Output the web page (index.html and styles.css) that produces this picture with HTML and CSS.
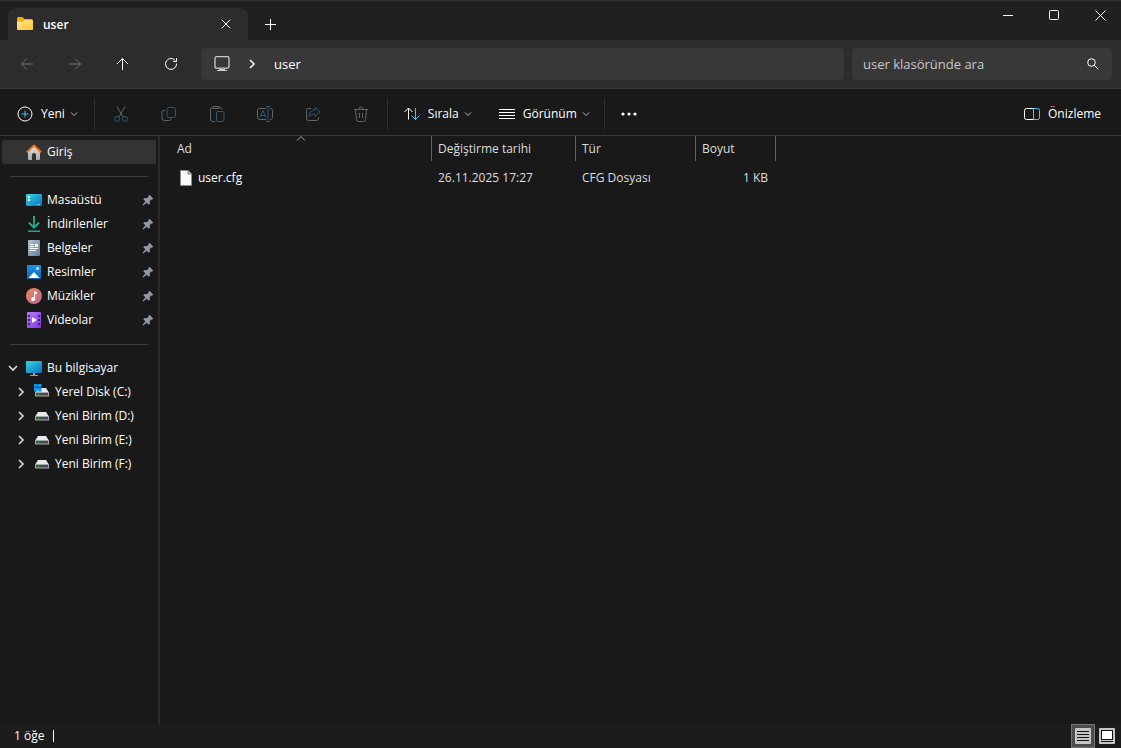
FILE: index.html
```html
<!DOCTYPE html>
<html lang="tr">
<head>
  <meta charset="UTF-8">
  <title>user</title>
  <link rel="stylesheet" href="styles.css">
</head>
<body>
  <svg class="defs" aria-hidden="true">
    <defs>
      <linearGradient id="blue" x1="0" y1="0" x2="1" y2="1"><stop offset="0" stop-color="#35d6e0"/><stop offset="1" stop-color="#0a6fc2"/></linearGradient>
      <linearGradient id="gold" x1="0" y1="0" x2="1" y2="1"><stop offset="0" stop-color="#ffe69a"/><stop offset="1" stop-color="#ffc62e"/></linearGradient>
      <linearGradient id="grey" x1="0" y1="0" x2="0" y2="1"><stop offset="0" stop-color="#e4e4e4"/><stop offset="1" stop-color="#a8a8a8"/></linearGradient>
      <linearGradient id="green" x1="0" y1="0" x2="0" y2="1"><stop offset="0" stop-color="#2fd08a"/><stop offset="1" stop-color="#12a59a"/></linearGradient>
      <linearGradient id="slate" x1="0" y1="0" x2="1" y2="1"><stop offset="0" stop-color="#b4c4d6"/><stop offset="1" stop-color="#5f7f9f"/></linearGradient>
      <linearGradient id="sky" x1="0" y1="0" x2="0" y2="1"><stop offset="0" stop-color="#1a94e4"/><stop offset="1" stop-color="#0c65bd"/></linearGradient>
      <linearGradient id="music" x1="0" y1="0" x2="1" y2="1"><stop offset="0" stop-color="#f28b52"/><stop offset="1" stop-color="#b8629c"/></linearGradient>
      <linearGradient id="purple" x1="0" y1="0" x2="1" y2="1"><stop offset="0" stop-color="#b67bfa"/><stop offset="1" stop-color="#8038e0"/></linearGradient>
    </defs>
    <symbol id="down" viewBox="0 0 8 8"><path d="M1 2.500l3 3 3-3"/></symbol>
    <symbol id="right" viewBox="0 0 10 10"><path d="M3 1l4 4-4 4"/></symbol>
    <symbol id="pin" viewBox="0 0 12 12"><path d="M7.500.8l3.700 3.700-1 1-.7-.1-1.700 1.700.1 2.400-1.200 1.200-2-2L1.300 11.400l-.7-.7 2.700-3.400-2-2 1.200-1.200 2.400.1L6.600 2.500l-.1-.7z"/></symbol>
    <symbol id="drive" viewBox="0 0 16 16"><path d="M4 4h8l2.500 4h-13z" fill="#e6e8ec"/><path d="M1 8h14v4.500H1z" fill="#a9a9ad"/><path d="M2 9h12v2.500H2z" fill="#4a4a4d"/><path d="M4 10h1v1H4z" fill="#38e03e"/></symbol>
  </svg>

  <header class="title-bar">
    <div class="tab">
      <svg class="icon" viewBox="0 0 16 16"><path d="M0 2.500C0 1.700.7 1 1.500 1h4l2 2H14c1 0 2 .6 2 1.500V8H0z" fill="#f2a900"/><path d="M0 5.500h6L8 4h7c.6 0 1 .4 1 1v8c0 .6-.4 1-1 1H1c-.6 0-1-.4-1-1z" fill="url(#gold)"/></svg>
      <span class="tab-name">user</span>
      <button class="tab-close" aria-label="Sekmeyi kapat"><svg class="line" width="10" height="10" viewBox="0 0 10 10"><path d="M.8.8l8.400 8.400M9.200.8L.8 9.200"/></svg></button>
    </div>
    <button class="tab-new" aria-label="Yeni sekme"><svg class="line" width="11" height="11" viewBox="0 0 11 11"><path d="M5.500 0v11M0 5.500h11"/></svg></button>
    <div class="window-buttons">
      <button aria-label="Simge durumuna küçült"><svg class="line" width="11" height="11" viewBox="0 0 11 11"><path d="M0 5.500h10"/></svg></button>
      <button aria-label="Ekranı kapla"><svg class="line" width="11" height="11" viewBox="0 0 11 11"><rect x=".5" y=".5" width="9" height="9" rx="1"/></svg></button>
      <button aria-label="Kapat"><svg class="line" width="11" height="11" viewBox="0 0 11 11"><path d="M.5.5l10 10M10.500.5l-10 10"/></svg></button>
    </div>
  </header>

  <div class="nav-bar">
    <button class="nav-button" aria-label="Geri" disabled><svg class="icon line" viewBox="0 0 16 16"><path d="M14 8H2.500M8 2.500L2.500 8 8 13.500"/></svg></button>
    <button class="nav-button" aria-label="İleri" disabled><svg class="icon line" viewBox="0 0 16 16"><path d="M2 8h11.500M8 2.500L13.500 8 8 13.500"/></svg></button>
    <button class="nav-button" aria-label="Yukarı"><svg class="icon line" viewBox="0 0 16 16"><path d="M7.500 14V2.500M2 8l5.500-5.500L13 8"/></svg></button>
    <button class="nav-button" aria-label="Yenile"><svg class="icon line" viewBox="0 0 16 16"><path d="M13.500 7.500A5.500 5.500 0 1 1 12.300 4.500M13.500 2v3.500H10"/></svg></button>
    <nav class="address">
      <svg class="icon line monitor" viewBox="0 0 16 16"><rect x="1" y=".7" width="14" height="11.500" rx="1.500" stroke-width="1.300"/><path d="M5.500 12.500v2M10.500 12.500v2M3 14.500h10M5.500 13.500h5"/></svg>
      <svg class="line arrow" width="10" height="10"><use href="#right"/></svg>
      <a href="#">user</a>
    </nav>
    <div class="search">
      <input type="text" aria-label="Ara" placeholder="user klasöründe ara">
      <svg class="line" width="12" height="12" viewBox="0 0 12 12"><circle cx="4.500" cy="4.500" r="3.800"/><path d="M7.300 7.300l4 4"/></svg>
    </div>
  </div>

  <div class="command-bar">
    <button class="command new"><svg class="icon line" viewBox="0 0 16 16"><circle cx="8" cy="8" r="7"/><path class="accent" d="M8 4.500v7M4.500 8h7"/></svg>Yeni<svg class="line caret" width="8" height="8"><use href="#down"/></svg></button>
    <div class="group">
      <button class="tool" aria-label="Kes" disabled><svg class="icon line" viewBox="0 0 16 16"><path d="M4 .5l6 10.500M12 .5L6 11"/><circle class="accent" cx="4" cy="13" r="2.500"/><circle class="accent" cx="12" cy="13" r="2.500"/></svg></button>
      <button class="tool" aria-label="Kopyala" disabled><svg class="icon line" viewBox="0 0 16 16"><path d="M4 4.500H3a2 2 0 0 0-2 2V12a2.500 2.500 0 0 0 2.500 2.500H8a2 2 0 0 0 2-2"/><rect class="accent" x="6" y="1.500" width="8.500" height="10" rx="2"/></svg></button>
      <button class="tool" aria-label="Yapıştır" disabled><svg class="icon line" viewBox="0 0 16 16"><path d="M6 15.500H3.500a2 2 0 0 1-2-2v-10a2 2 0 0 1 2-2H4M10 1.500h1a2 2 0 0 1 2 2M4 .5h6v2H4z"/><rect class="accent" x="7.500" y="5.500" width="7.500" height="10" rx="1.500"/></svg></button>
      <button class="tool" aria-label="Yeniden adlandır" disabled><svg class="icon line" viewBox="0 0 16 16"><path d="M9 2.500H2.500a2 2 0 0 0-2 2v7a2 2 0 0 0 2 2H9M13 2.500h.5a2 2 0 0 1 2 2v7a2 2 0 0 1-2 2H13"/><path class="accent" d="M3 11.500l3-7 3 7M4 9.500h4M11 .5v15M9 .5h4M9 15.500h4"/></svg></button>
      <button class="tool" aria-label="Paylaş" disabled><svg class="icon line" viewBox="0 0 16 16"><path d="M6 2.500H3.500a2 2 0 0 0-2 2v8a2 2 0 0 0 2 2h8a2 2 0 0 0 2-2V11"/><path class="accent" d="M10 1.500l5 4.500-5 4.500V8C7 8 5.500 9 4 11c0-4 2-7 6-7z"/></svg></button>
      <button class="tool" aria-label="Sil" disabled><svg class="icon line" viewBox="0 0 16 16"><path d="M1 3.500h14M6 3a2 2 0 0 1 4 0M2.500 3.500l1 10a2 2 0 0 0 2 2h5a2 2 0 0 0 2-2l1-10M6.500 7v5M9.500 7v5"/></svg></button>
    </div>
    <button class="command"><svg class="icon line" viewBox="0 0 16 16"><path d="M4.500 13.500V2M.5 6l4-4 4 4"/><path class="accent" d="M11.500 2v11.500M7.500 9.500l4 4 4-4"/></svg>Sırala<svg class="line caret" width="8" height="8"><use href="#down"/></svg></button>
    <button class="command view"><svg class="icon line" viewBox="0 0 16 16"><path d="M0 3.500h16M0 6.500h16M0 9.500h16M0 12.500h16"/></svg>Görünüm<svg class="line caret" width="8" height="8"><use href="#down"/></svg></button>
    <button class="more" aria-label="Daha fazla"><svg class="icon" viewBox="0 0 16 16" fill="#fff"><circle cx="2" cy="8" r="1.600"/><circle cx="8" cy="8" r="1.600"/><circle cx="14" cy="8" r="1.600"/></svg></button>
    <button class="command preview"><svg class="icon line" viewBox="0 0 16 16"><path d="M9.500 2.500h-7a2 2 0 0 0-2 2v7a2 2 0 0 0 2 2h7"/><path class="accent" d="M9.500 2.500h4a2 2 0 0 1 2 2v7a2 2 0 0 1-2 2h-4z"/></svg>Önizleme</button>
  </div>

  <div class="content">
    <nav class="sidebar">
      <a class="place active" href="#"><svg class="icon" viewBox="0 0 16 16"><path d="M2 7.500L8 2l6 5.500V15a1 1 0 0 1-1 1h-3v-5a2 2 0 0 0-4 0v5H3a1 1 0 0 1-1-1z" fill="url(#grey)"/><path d="M.8 8.200L8 1.500l7.200 6.700" fill="none" stroke="#ec7413" stroke-width="2"/></svg>Giriş</a>
      <hr>
      <a class="place" href="#"><svg class="icon" viewBox="0 0 16 16"><rect y="2" width="16" height="12" rx="1" fill="url(#blue)"/><path d="M2 4h2v2H2zM2 7h2v2H2zM11 12h1v1h-1zM13 12h1v1h-1z" fill="#fff"/></svg>Masaüstü<svg class="pin" width="12" height="12"><use href="#pin"/></svg></a>
      <a class="place" href="#"><svg class="icon" viewBox="0 0 16 16"><path d="M7.200 0h1.600v9.500L12.500 6l1.200 1.200L8 13 2.300 7.200 3.500 6l3.700 3.500zM2 14.500h12V16H2z" fill="url(#green)"/></svg>İndirilenler<svg class="pin" width="12" height="12"><use href="#pin"/></svg></a>
      <a class="place" href="#"><svg class="icon" viewBox="0 0 16 16"><rect x="2" width="12" height="16" rx="1" fill="url(#slate)"/><path d="M4 4h4v1H4zM4 6h4v1H4zM9 4h3v3H9zM4 8h8v1H4zM4 10h6v1H4z" fill="#fff"/></svg>Belgeler<svg class="pin" width="12" height="12"><use href="#pin"/></svg></a>
      <a class="place" href="#"><svg class="icon" viewBox="0 0 16 16"><rect x="1" y="1" width="14" height="14" rx="1" fill="url(#sky)"/><path d="M2.500 14L8 8l5.500 6z" fill="#fff"/><circle cx="11.500" cy="4.500" r="1.500" fill="#bde7ff"/></svg>Resimler<svg class="pin" width="12" height="12"><use href="#pin"/></svg></a>
      <a class="place" href="#"><svg class="icon" viewBox="0 0 16 16"><circle cx="8" cy="8" r="8" fill="url(#music)"/><path d="M8 3l3 1v2L9.200 5.500V11a2 2 0 1 1-1.200-1.800z" fill="#fff"/></svg>Müzikler<svg class="pin" width="12" height="12"><use href="#pin"/></svg></a>
      <a class="place" href="#"><svg class="icon" viewBox="0 0 16 16"><rect x="1" width="14" height="16" rx="1" fill="url(#purple)"/><path d="M6 5l5 3-5 3z" fill="#fff"/><path d="M2 3h2v2H2zM2 7h2v2H2zM2 11h2v2H2zM12 3h2v2h-2zM12 7h2v2h-2zM12 11h2v2h-2z" fill="#43207c"/></svg>Videolar<svg class="pin" width="12" height="12"><use href="#pin"/></svg></a>
      <hr>
      <div class="branch">
        <button class="toggle open" aria-label="Daralt"><svg class="line" width="10" height="10"><use href="#right"/></svg></button>
        <a href="#"><svg class="icon" viewBox="0 0 16 16"><path d="M7 13h2v2h3v1H4v-1h3z" fill="#9aa4ad"/><rect y="1" width="16" height="12" rx="1" fill="url(#blue)"/></svg>Bu bilgisayar</a>
      </div>
      <div class="branch child">
        <button class="toggle" aria-label="Genişlet"><svg class="line" width="10" height="10"><use href="#right"/></svg></button>
        <a href="#"><svg class="icon" viewBox="0 0 16 16"><use href="#drive"/><path d="M0 0h3.500v3.500H0zM4 0h3.500v3.500H4zM0 4h3.500v3.500H0zM4 4h3.500v3.500H4z" fill="#1593e6"/></svg>Yerel Disk (C:)</a>
      </div>
      <div class="branch child">
        <button class="toggle" aria-label="Genişlet"><svg class="line" width="10" height="10"><use href="#right"/></svg></button>
        <a href="#"><svg class="icon"><use href="#drive"/></svg>Yeni Birim (D:)</a>
      </div>
      <div class="branch child">
        <button class="toggle" aria-label="Genişlet"><svg class="line" width="10" height="10"><use href="#right"/></svg></button>
        <a href="#"><svg class="icon"><use href="#drive"/></svg>Yeni Birim (E:)</a>
      </div>
      <div class="branch child">
        <button class="toggle" aria-label="Genişlet"><svg class="line" width="10" height="10"><use href="#right"/></svg></button>
        <a href="#"><svg class="icon"><use href="#drive"/></svg>Yeni Birim (F:)</a>
      </div>
    </nav>

    <main class="files">
      <table>
        <thead>
          <tr>
            <th class="name">Ad<svg class="sort line" width="10" height="6" viewBox="0 0 10 6"><path d="M1 4.500l4-4 4 4"/></svg></th>
            <th class="date">Değiştirme tarihi</th>
            <th class="type">Tür</th>
            <th class="size">Boyut</th>
          </tr>
        </thead>
        <tbody>
          <tr>
            <td class="name"><a href="#"><svg class="icon" viewBox="0 0 16 16"><path d="M3.500.5H11L14.500 4v11.500h-11z" fill="#fafafa" stroke="#8a8a8a"/><path d="M11 .5V4h3.500" fill="#ccc" stroke="#777"/></svg>user.cfg</a></td>
            <td>26.11.2025 17:27</td>
            <td>CFG Dosyası</td>
            <td class="number">1 KB</td>
          </tr>
        </tbody>
      </table>
    </main>
  </div>

  <footer class="status-bar">
    <span class="count">1 öğe</span>
    <div class="layouts">
      <button class="selected" aria-label="Ayrıntılar"><svg class="icon" viewBox="0 0 16 16"><rect width="16" height="16" rx="1" fill="#c8c6c4"/><path d="M2 3.500h12M2 6.500h12M2 9.500h12M2 12.500h12" stroke="#111"/></svg></button>
      <button aria-label="Büyük simgeler"><svg class="icon" viewBox="0 0 16 16"><rect width="16" height="16" rx="1" fill="#c8c6c4"/><rect x="2.500" y="2.500" width="11" height="9" fill="#fff" stroke="#111"/><path d="M2 13.500h12" stroke="#111"/></svg></button>
    </div>
  </footer>
</body>
</html>
```
FILE: styles.css
```css
* {
  box-sizing: border-box;
}
body {
  display: flex;
  flex-direction: column;
  min-height: 100vh;
  margin: 0;
  background: #191919;
  color: #fff;
  font: 12px/16px "Open Sans", "Noto Sans", sans-serif;
}
button {
  display: flex;
  align-items: center;
  justify-content: center;
  padding: 0;
  border: 0;
  background: none;
  color: inherit;
  font: inherit;
}
a {
  color: inherit;
  text-decoration: none;
}
svg {
  flex: none;
}
.defs {
  position: absolute;
  width: 0;
  height: 0;
}
.icon {
  width: 16px;
  height: 16px;
}
.line {
  fill: none;
  stroke: currentColor;
}
.accent {
  stroke: #4cc2ff;
}

/* title bar */
.title-bar {
  display: flex;
  height: 40px;
  padding-left: 8px;
  border-top: 1px solid #333;
  background: #202020;
}
.tab {
  display: flex;
  align-items: center;
  width: 240px;
  margin-top: 7px;
  padding: 0 11px 0 9px;
  border-radius: 8px 8px 0 0;
  background: #2c2c2c;
}
.tab-name {
  flex: 1;
  margin-left: 10px;
  padding-top: 2px;
  font-weight: 600;
}
.tab-close {
  width: 22px;
  height: 22px;
}
.tab-new {
  width: 44px;
  padding-top: 8px;
}
.window-buttons {
  display: flex;
  height: 28px;
  margin-left: auto;
}
.window-buttons button {
  width: 46px;
  padding-left: 4px;
}

/* navigation */
.nav-bar {
  display: flex;
  align-items: center;
  height: 49px;
  padding: 0 9px 0 3px;
  border-bottom: 1px solid #3a3a3a;
  background: #2c2c2c;
}
.nav-button {
  width: 48px;
  height: 32px;
}
.nav-button:disabled {
  color: #727272;
}
.address,
.search {
  display: flex;
  align-items: center;
  height: 32px;
  border-radius: 4px;
  background: #383838;
  font-size: 13px;
}
.address {
  flex: 1;
  gap: 17px;
  margin: 0 8px 0 6px;
  padding-left: 13px;
}
.monitor {
  color: #ccc;
}
.arrow {
  stroke-width: 1.5px;
}
.search {
  width: 260px;
  padding: 0 13px 0 11px;
}
.search input {
  flex: 1;
  min-width: 0;
  padding: 0;
  border: 0;
  outline: 0;
  background: none;
  color: #fff;
  font: inherit;
}
.search input::placeholder {
  color: #c8c8c8;
}

/* commands */
.command-bar {
  display: flex;
  align-items: center;
  height: 47px;
  padding: 3px 20px 0 17px;
  border-bottom: 1px solid #3a3a3a;
}
.command {
  gap: 8px;
}
.command .caret {
  margin-left: -3px;
  color: #bbb;
}
.new {
  margin-right: 16px;
}
.group {
  display: flex;
  align-items: center;
  height: 32px;
  margin-right: 16px;
  padding: 0 2px;
  border: solid #2e2e2e;
  border-width: 0 1px;
}
.tool {
  width: 48px;
  height: 32px;
}
.tool:disabled {
  color: #656565;
}
.tool:disabled .accent {
  stroke: #2a5a75;
}
.view {
  margin-left: 27px;
}
.more {
  height: 32px;
  margin-left: 14px;
  padding-left: 16px;
  border-left: 1px solid #2e2e2e;
}
.preview {
  margin-left: auto;
}

/* folders */
.content {
  display: flex;
  flex: 1;
}
.sidebar {
  width: 160px;
  padding: 4px 2px 4px 0;
  border-right: 2px solid #2b2b2b;
}
.sidebar hr {
  height: 1px;
  margin: 12px 8px 11px 10px;
  border: 0;
  background: #3d3d3d;
}
.place {
  display: flex;
  align-items: center;
  gap: 5px;
  height: 24px;
  margin-left: 2px;
  padding: 0 2px 0 24px;
}
.active {
  border-radius: 2px;
  background: #333;
}
.pin {
  margin-left: auto;
  fill: #8d99a3;
}
.branch {
  display: flex;
  align-items: center;
  height: 24px;
  padding-left: 8px;
}
.branch a {
  display: flex;
  align-items: center;
  gap: 5px;
}
.child {
  padding-left: 16px;
}
.toggle {
  width: 10px;
  height: 24px;
  margin-right: 8px;
  color: #ddd;
}
.toggle .line {
  stroke-width: 1.6px;
}
.open svg {
  transform: rotate(90deg);
}

/* file list */
.files {
  flex: 1;
}
.files table {
  width: 616px;
  border-collapse: separate;
  border-spacing: 0;
  table-layout: fixed;
}
.files th {
  position: relative;
  height: 25px;
  padding: 0 6px;
  border-right: 1px solid #636363;
  color: #dedede;
  font-weight: normal;
  text-align: left;
}
.files td {
  height: 34px;
  padding: 0 6px;
  color: #dedede;
}
.files .name {
  width: 272px;
  padding-left: 17px;
}
.files .name a {
  display: flex;
  align-items: center;
  gap: 5px;
  color: #fff;
}
.date {
  width: 144px;
}
.type {
  width: 120px;
}
.size {
  width: 80px;
}
.files .number {
  padding-right: 8px;
  text-align: right;
}
.sort {
  position: absolute;
  top: 0;
  left: 50%;
  color: #aaa;
}

/* status bar */
.status-bar {
  display: flex;
  align-items: center;
  height: 24px;
  padding: 0 2px 0 14px;
  background: #1c1c1c;
}
.count {
  padding-right: 9px;
  border-right: 1px solid #fff;
  line-height: 12px;
}
.layouts {
  display: flex;
  margin-left: auto;
}
.layouts button {
  width: 24px;
  height: 24px;
}
.layouts .selected {
  border: 1px solid #777;
  background: #4d4d4d;
}
```
